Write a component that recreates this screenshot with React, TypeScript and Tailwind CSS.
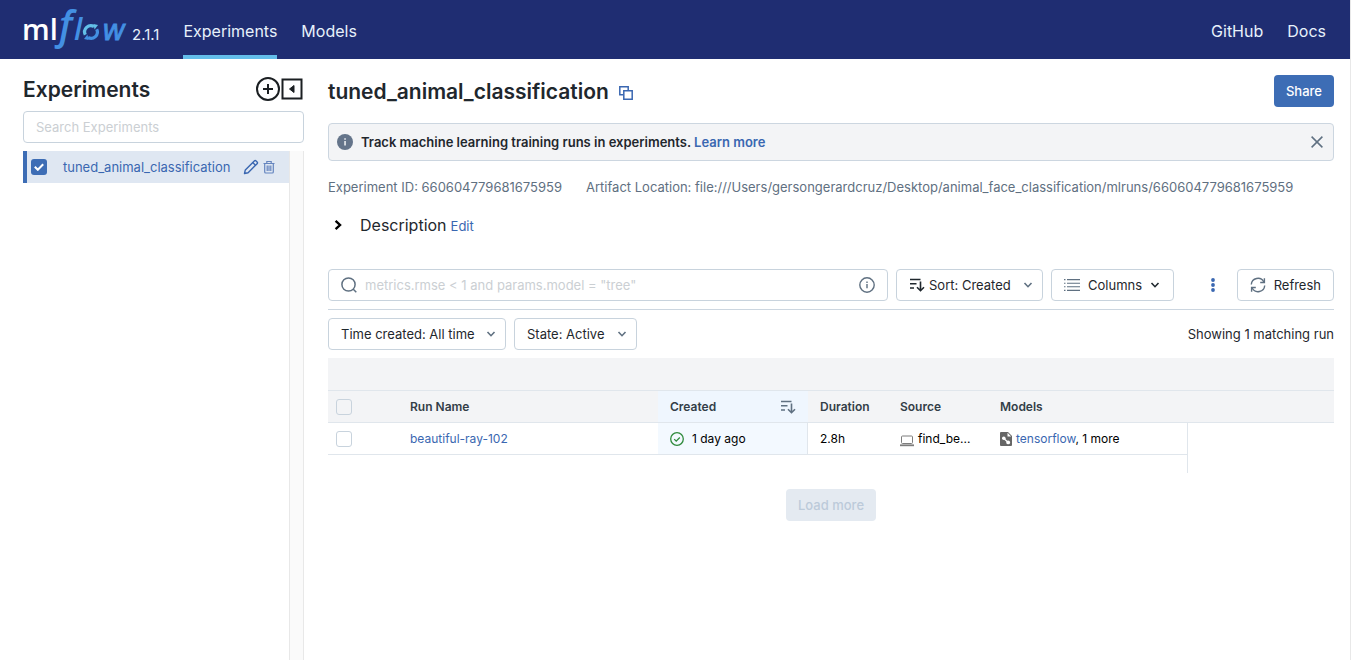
import type { ReactNode } from "react";

const INK = "text-[#1f272d]";
const LINK = "text-[#3a67b1]";
const FIELD = "rounded border border-[#c8d3dd] bg-white";

function Logo() {
  return (
    <svg className="overflow-visible" width="108" height="44" viewBox="0 0 108 44" role="img" aria-label="mlflow">
      <g fontFamily="'Open Sans', 'Noto Sans', sans-serif">
        <text x="-1" y="32" fontSize="29" fontWeight="600" fill="#ffffff">ml</text>
        <text x="36" y="31" fontSize="39" fontWeight="600" fontStyle="italic" fill="#4390e3">f</text>
        <text x="51" y="32" fontSize="30" fontWeight="600" fontStyle="italic" fill="#4390e3">l</text>
        <text x="79" y="32" fontSize="29" fontStyle="italic" fontFamily="'DejaVu Sans', sans-serif" fill="#4390e3" stroke="#4390e3" strokeWidth=".8">w</text>
      </g>
      <g fill="none" strokeWidth="3.200">
        <path d="M62.300 26.800 A6.300 6.300 0 0 1 71 18.500" stroke="#63c0e8" />
        <path d="M73.700 21.200 A6.300 6.300 0 0 1 65 29.500" stroke="#4390e3" />
      </g>
      <path d="M70.500 16 L75 17 L71.500 21.500 Z" fill="#63c0e8" />
      <path d="M65.500 32 L61 31 L64.500 26.500 Z" fill="#4390e3" />
    </svg>
  );
}

function PlusCircle() {
  return (
    <svg width="24" height="24" viewBox="0 0 24 24" fill="none" stroke="#1b1f22" strokeWidth="2">
      <circle cx="12" cy="12" r="11" />
      <path d="M12 7v10M7 12h10" />
    </svg>
  );
}

function CollapseBox() {
  return (
    <svg width="22" height="24" viewBox="0 0 22 24" fill="none" stroke="#1b1f22" strokeWidth="2">
      <path d="M1.500 2.500h19v19h-19z" />
      <path d="M13 8.500v7L8.500 12z" fill="#1b1f22" strokeWidth="1" strokeLinejoin="round" />
    </svg>
  );
}

function Pencil() {
  return (
    <svg width="16" height="16" viewBox="0 0 16 16" fill="none" stroke="#3a67b1" strokeWidth="1.400" strokeLinejoin="round">
      <path d="M1.500 14.500l.8-3.600L11.300 1.900a1.300 1.300 0 0 1 1.800 0l1 1a1.300 1.300 0 0 1 0 1.800L5.100 13.700z" />
      <path d="M9.700 3.500l2.800 2.800" />
    </svg>
  );
}

function Trash() {
  return (
    <svg width="12" height="14" viewBox="0 0 12 14" fill="none" stroke="#6585bf" strokeWidth="1.200">
      <path d="M.5 3.500h11M3.800 3.500V1.500h4.400v2M1.700 3.500v8.500a1 1 0 0 0 1 1h6.600a1 1 0 0 0 1-1V3.500M4.200 5.500v5.500M6 5.500v5.500M7.800 5.500v5.500" />
    </svg>
  );
}

function Copy() {
  return (
    <svg width="14" height="14" viewBox="0 0 14 14" fill="none" stroke="#3a67b1" strokeWidth="1.500">
      <path d="M4 8.700H.8V.8h8.400V4" />
      <path d="M4.800 4.800h8.400v8.400H4.800z" />
    </svg>
  );
}

function InfoSolid() {
  return (
    <svg width="16" height="16" viewBox="0 0 16 16">
      <circle cx="8" cy="8" r="8" fill="#64748a" />
      <path d="M7.300 4.300h1.500v1.500H7.300zM7.300 6.900h1.500v4.600H7.300z" fill="#f3f4f6" />
    </svg>
  );
}

function InfoOutline() {
  return (
    <svg width="16" height="16" viewBox="0 0 16 16">
      <circle cx="8" cy="8" r="7.200" fill="none" stroke="#5f7081" strokeWidth="1.400" />
      <path d="M7.300 4.500h1.400v1.400H7.300zM7.300 7h1.400v4.300H7.300z" fill="#5f7081" />
    </svg>
  );
}

function Close() {
  return (
    <svg width="12" height="12" viewBox="0 0 12 12" stroke="#5f7081" strokeWidth="1.500">
      <path d="M.6.6l10.800 10.800M11.400.6L.6 11.400" />
    </svg>
  );
}

function Chevron({ className }: { className: string }) {
  return (
    <svg className={className} width="10" height="10" viewBox="0 0 10 10" fill="none" stroke="currentColor" strokeWidth="1.600">
      <path d="M1.500 3L5 6.700L8.500 3" />
    </svg>
  );
}

function SearchIcon() {
  return (
    <svg width="16" height="16" viewBox="0 0 16 16" fill="none" stroke="#5f7081" strokeWidth="1.500">
      <circle cx="7.500" cy="7.500" r="6.600" />
      <path d="M12 12l3.300 3.200" />
    </svg>
  );
}

function SortIcon({ className }: { className: string }) {
  return (
    <svg className={className} width="16" height="14" viewBox="0 0 16 14" fill="none" stroke="currentColor" strokeWidth="1.600">
      <path d="M1 1.500h10.500M1 5.800h6.500M1 10h4M11.500 3.500v8.800M8 9.200l3.500 3.500L15 9.200" />
    </svg>
  );
}

function ListIcon() {
  return (
    <svg width="16" height="12" viewBox="0 0 16 12" stroke="#5f7081" strokeWidth="1.100">
      <path d="M3 .6h13M3 4.200h13M3 7.800h13M3 11.400h13M0 .6h1.500M0 4.200h1.500M0 7.800h1.500M0 11.400h1.500" />
    </svg>
  );
}

function Dots() {
  return (
    <svg width="4" height="14" viewBox="0 0 4 14" fill="#3a67b1">
      <circle cx="2" cy="2" r="1.900" />
      <circle cx="2" cy="7" r="1.900" />
      <circle cx="2" cy="12" r="1.900" />
    </svg>
  );
}

function RefreshIcon() {
  return (
    <svg width="16" height="16" viewBox="0 0 16 16" fill="none" stroke="#5f7081" strokeWidth="1.400">
      <path d="M1.300 7.500A6.600 6.600 0 0 1 13.800 5M14.700 8.500A6.600 6.600 0 0 1 2.200 11" />
      <path d="M14.400 1.200v4.300h-4.200M1.600 14.800v-4.300h4.200" />
    </svg>
  );
}

function CheckCircle() {
  return (
    <svg width="14" height="14" viewBox="0 0 14 14" fill="none" stroke="#2f8a3c" strokeWidth="1.300">
      <circle cx="7" cy="7" r="6.300" />
      <path d="M4.200 7.100l2 2 3.600-3.600" />
    </svg>
  );
}

function Laptop() {
  return (
    <svg className="mt-1" width="14" height="12" viewBox="0 0 14 12" fill="none" stroke="#7d7d7d">
      <rect x="1.500" y="1" width="11" height="7.500" rx="1" />
      <path d="M0 10.300h14" strokeWidth="1.800" />
    </svg>
  );
}

function ModelFile() {
  return (
    <svg width="12" height="14" viewBox="0 0 12 14">
      <path d="M1 0h7l4 4v9a1 1 0 0 1-1 1H1a1 1 0 0 1-1-1V1a1 1 0 0 1 1-1z" fill="#666666" />
      <path d="M7.500 .8v3.700h3.700z" fill="#ffffff" />
      <path d="M3.800 6.500l4.200 3.800" stroke="#ffffff" strokeWidth="1.300" />
      <circle cx="3.800" cy="6.300" r="1.800" fill="#ffffff" />
      <circle cx="8.200" cy="10.400" r="1.900" fill="#ffffff" />
    </svg>
  );
}

function DropDown({ label, value, icon, width }: { label: string; value: string; icon?: ReactNode; width: string }) {
  return (
    <label className={`relative flex h-8 shrink-0 items-center gap-1 pl-3 ${width} ${FIELD}`}>
      {icon}
      <select aria-label={label} className="h-full min-w-0 flex-1 appearance-none bg-transparent pr-6 outline-none">
        <option>{value}</option>
      </select>
      <Chevron className="pointer-events-none absolute right-[9px] text-[#5f7081]" />
    </label>
  );
}

const BOX = "block size-4 appearance-none rounded-[3px] border border-[#c8d3dd]";

function Header() {
  return (
    <header className="flex h-[59px] items-stretch bg-[#1f2d72] pr-6 pl-[23px] text-base text-[#e7f1fb]">
      <a href="#" className="flex items-center pt-px">
        <Logo />
      </a>
      <span className="self-end pb-3 pl-px text-[15px] leading-6">2.1.1</span>
      <nav className="ml-6 flex gap-6">
        <a href="#experiments" className="flex items-center border-b-4 border-[#63bdea] pt-1.5">Experiments</a>
        <a href="#models" className="flex items-center border-b-4 border-transparent pt-1.5">Models</a>
      </nav>
      <nav className="ml-auto flex gap-6">
        <a href="#github" className="flex items-center border-b-4 border-transparent pt-1.5">GitHub</a>
        <a href="#docs" className="flex items-center border-b-4 border-transparent pt-1.5">Docs</a>
      </nav>
    </header>
  );
}

function Sidebar() {
  return (
    <aside className="flex w-[281px] shrink-0 flex-col">
      <div className="flex h-[52px] items-center pt-2">
        <h2 className="pt-0.5 text-[21px] leading-7 font-semibold">Experiments</h2>
        <div className="mr-px ml-auto flex items-center gap-px">
          <button aria-label="New experiment"><PlusCircle /></button>
          <button aria-label="Collapse sidebar"><CollapseBox /></button>
        </div>
      </div>
      <input
        aria-label="Search experiments"
        placeholder="Search Experiments"
        className={`h-8 w-full px-3 outline-none placeholder:text-[#cbcfd3] ${FIELD}`}
      />
      <div className="mt-2 flex flex-1">
        <div className="flex-1">
          <div className="flex h-8 items-center border-l-4 border-[#3d6db5] bg-[#dfe7f2] pl-1">
            <span className="grid size-4 place-items-center">
              <input id="exp" type="checkbox" defaultChecked className="col-start-1 row-start-1 size-4 appearance-none rounded-[3px] bg-[#3d6db5]" />
              <svg className="pointer-events-none col-start-1 row-start-1" width="10" height="8" viewBox="0 0 10 8" fill="none" stroke="#ffffff" strokeWidth="2">
                <path d="M.8 3.800l3 3L9.200 1.200" />
              </svg>
            </span>
            <label htmlFor="exp" className={`ml-4 ${LINK}`}>tuned_animal_classification</label>
            <div className="mr-[14px] ml-auto flex items-center gap-1">
              <button aria-label="Rename experiment"><Pencil /></button>
              <button aria-label="Delete experiment"><Trash /></button>
            </div>
          </div>
        </div>
        <div className="w-[15px] border-x border-[#e8e8e8] bg-[#fafafa]" />
      </div>
    </aside>
  );
}

function RunsTable() {
  return (
    <table className="mt-2 w-full table-fixed border-separate border-spacing-0 text-left text-[12px]">
      <colgroup>
        <col className="w-[70px]" />
        <col className="w-[260px]" />
        <col className="w-[150px]" />
        <col className="w-[80px]" />
        <col className="w-[100px]" />
        <col className="w-[200px]" />
        <col />
      </colgroup>
      <thead className="bg-[#f3f4f6] text-[#333e48]">
        <tr className="h-[33px]">
          <td colSpan={7} className="border-b border-[#e0e6ec]" />
        </tr>
        <tr className="h-8 *:border-b *:border-[#e0e6ec] *:p-0 *:font-semibold">
          <td><input type="checkbox" aria-label="Select all runs" className={`ml-2 ${BOX}`} /></td>
          <th><span className="pl-3">Run Name</span></th>
          <th className="bg-[#eff6fe]">
            <div className="flex items-center justify-between px-3">
              Created
              <SortIcon className="text-[#5f7081]" />
            </div>
          </th>
          <th><span className="pl-3">Duration</span></th>
          <th><span className="pl-3">Source</span></th>
          <th><span className="pl-3">Models</span></th>
          <td />
        </tr>
      </thead>
      <tbody className="text-black">
        <tr className="h-8 *:border-b *:border-[#e0e6ec] *:p-0">
          <td><input type="checkbox" aria-label="Select beautiful-ray-102" className={`ml-2 ${BOX}`} /></td>
          <td><a href="#run" className={`pl-3 ${LINK}`}>beautiful-ray-102</a></td>
          <td className="border-r bg-[#f3f9ff]">
            <div className="flex items-center gap-2 pl-3"><CheckCircle />1 day ago</div>
          </td>
          <td><span className="pl-3">2.8h</span></td>
          <td><div className="flex items-center gap-1 pl-3"><Laptop />find_be...</div></td>
          <td className="border-r">
            <div className="flex items-center gap-1 pl-3">
              <ModelFile />
              <span><a href="#model" className={LINK}>tensorflow</a>, 1 more</span>
            </div>
          </td>
          <td className="border-b-0!" />
        </tr>
        <tr className="h-[18px]">
          <td colSpan={6} className="border-r border-[#e0e6ec]" />
          <td />
        </tr>
      </tbody>
    </table>
  );
}

export default function App() {
  return (
    <div className={`flex min-h-screen flex-col border-r border-[#e8e8e8] bg-white font-['Inter','Liberation_Sans',sans-serif] text-[13px] leading-5 ${INK}`}>
      <Header />
      <div className="flex flex-1 gap-6 pr-4 pl-[23px]">
        <Sidebar />
        <main className="min-w-0 flex-1 pt-4">
          <div className="flex h-8 items-center">
            <h1 className="pt-0.5 text-[21px] leading-7 font-semibold">tuned_animal_classification</h1>
            <button aria-label="Copy name" className="mt-1 ml-2.5"><Copy /></button>
            <button className="ml-auto h-8 rounded bg-[#3d6db5] px-3 font-medium text-white">Share</button>
          </div>

          <div className="mt-4 flex h-[38px] items-center rounded border border-[#ccd6e0] bg-[#f3f4f6] px-2 font-semibold">
            <InfoSolid />
            <p className="ml-2">
              Track machine learning training runs in experiments.{" "}
              <a href="#learn" className={LINK}>Learn more</a>
            </p>
            <button aria-label="Dismiss" className="mr-0.5 ml-auto"><Close /></button>
          </div>

          <div className="mt-4 flex gap-6 text-[#5f7081]">
            <span>Experiment ID: 660604779681675959</span>
            <span>Artifact Location: file:///Users/gersongerardcruz/Desktop/animal_face_classification/mlruns/660604779681675959</span>
          </div>

          <div className="mt-4 flex h-6 items-center">
            <button aria-label="Show description" className="flex w-8 pl-1"><Chevron className="size-3 -rotate-90 stroke-2 text-black" /></button>
            <h3 className="text-base">Description</h3>
            <button className={`ml-1 pt-0.5 ${LINK}`}>Edit</button>
          </div>

          <div className="mt-8 flex items-center gap-2 border-b border-[#ccd6e0] pb-2">
            <label className={`flex h-8 w-[560px] items-center gap-2 px-3 ${FIELD}`}>
              <SearchIcon />
              <input
                aria-label="Search runs"
                placeholder={'metrics.rmse < 1 and params.model = "tree"'}
                className="h-full min-w-0 flex-1 bg-transparent outline-none placeholder:text-[#cbcfd3]"
              />
              <InfoOutline />
            </label>
            <DropDown label="Sort" value="Sort: Created" width="w-[147px]" icon={<SortIcon className="shrink-0" />} />
            <button className={`flex h-8 w-[123px] shrink-0 items-center gap-2 px-3 ${FIELD}`}>
              <ListIcon />
              Columns
              <Chevron className="text-[#1f272d]" />
            </button>
            <button aria-label="More options" className="ml-auto flex size-8 items-center justify-center"><Dots /></button>
            <button className={`flex h-8 shrink-0 items-center gap-2 px-3 ${FIELD}`}>
              <RefreshIcon />
              Refresh
            </button>
          </div>

          <div className="mt-2 flex items-center gap-2">
            <DropDown label="Time created" value="Time created: All time" width="w-[178px]" />
            <DropDown label="State" value="State: Active" width="w-[123px]" />
            <span className="ml-auto">Showing 1 matching run</span>
          </div>

          <RunsTable />

          <div className="mt-4 flex justify-center">
            <button disabled className="h-8 rounded bg-[#e4eaf1] px-3 font-medium text-[#bccada]">Load more</button>
          </div>
        </main>
      </div>
    </div>
  );
}
